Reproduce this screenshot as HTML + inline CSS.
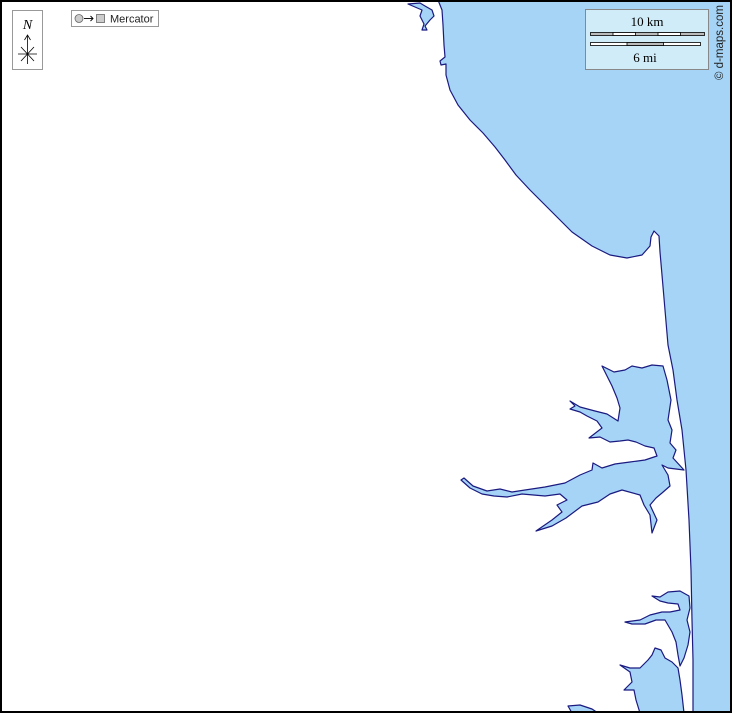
<!DOCTYPE html>
<html><head><meta charset="utf-8"><style>
html,body{margin:0;padding:0;background:#fff}
svg{display:block}
</style></head><body>
<svg width="732" height="713" viewBox="0 0 732 713" xmlns="http://www.w3.org/2000/svg">
<rect x="0" y="0" width="732" height="713" fill="#fff"/>
<g fill="#a6d4f6" stroke="#1a1a80" stroke-width="1.2" stroke-linejoin="round">
<path d="M438,0 L442,10 L443,25 L444,45 L445,57 L440,61 L441,65 L446,64 L446,75 L450,90 L458,105 L470,120 L483,133 L495,147 L505,160 L516,175 L530,190 L545,205 L556,216 L572,232 L592,246 L610,255 L627,258 L642,255 L650,246 L651,237 L654,231 L659,236 L660,252 L662,275 L665,310 L668,345 L673,370 L677,400 L682,430 L686,470 L689,520 L691,570 L692,620 L693,660 L693,713 L732,713 L732,0 Z"/>
<path d="M408,4 L420,3 L425,6 L432,10 L434,16 L430,20 L425,26 L427,30 L422,30 L424,24 L420,16 L422,10 L415,7 Z"/>
<path d="M602,366 L614,372 L625,370 L632,366 L642,368 L652,365 L663,366 L667,380 L671,400 L668,420 L672,430 L670,443 L676,450 L673,458 L684,470 L668,468 L662,465 L668,475 L670,486 L662,493 L656,498 L650,505 L657,520 L652,533 L650,515 L644,505 L640,495 L622,490 L610,494 L598,502 L582,506 L566,518 L552,526 L536,531 L552,520 L562,512 L557,505 L567,500 L560,494 L545,496 L522,494 L507,497 L494,496 L482,494 L470,488 L461,480 L464,478 L473,486 L487,491 L500,489 L512,492 L525,490 L545,487 L565,483 L580,475 L592,470 L593,463 L602,468 L615,464 L630,462 L645,460 L657,456 L654,448 L645,446 L636,442 L628,440 L620,441 L610,442 L600,437 L589,438 L602,428 L597,421 L587,416 L580,412 L570,409 L575,406 L570,401 L580,407 L595,411 L607,414 L618,421 L620,408 L617,398 L612,386 Z"/>
<path d="M652,596 L660,597 L668,592 L680,591 L689,596 L690,608 L687,620 L690,632 L688,645 L684,658 L680,666 L678,655 L676,642 L672,632 L665,620 L656,620 L645,624 L632,624 L625,622 L640,620 L650,615 L662,612 L670,612 L680,610 L678,604 L668,603 L660,601 Z"/>
<path d="M655,648 L661,650 L665,658 L672,662 L678,668 L680,680 L682,695 L684,713 L640,713 L636,700 L634,690 L624,690 L632,682 L630,672 L620,665 L630,668 L640,668 L648,660 L652,655 Z"/>
<path d="M568,706 L580,705 L592,709 L598,713 L572,713 Z"/>
</g>
<rect x="1" y="1" width="730" height="711" fill="none" stroke="#000" stroke-width="2"/>
<rect x="12.5" y="10.5" width="30" height="59" fill="#fff" stroke="#999"/>
<text x="27.5" y="29" font-family="Liberation Serif, serif" font-style="italic" font-size="14" text-anchor="middle">N</text>
<g stroke="#000" stroke-width="0.8" fill="none">
<line x1="27.5" y1="36" x2="27.5" y2="64"/>
<path d="M24.5,40 L27.5,35 L30.5,40"/>
<line x1="18" y1="54" x2="37" y2="54"/>
<line x1="21" y1="47" x2="34" y2="61"/>
<line x1="34" y1="47" x2="21" y2="61"/>
</g>
<rect x="71.5" y="10.5" width="87" height="16" fill="#fff" stroke="#999"/>
<circle cx="79" cy="18.5" r="4" fill="#ccc" stroke="#666" stroke-width="0.8"/>
<g stroke="#000" stroke-width="0.9" fill="none">
<line x1="84" y1="18.5" x2="93" y2="18.5"/>
<path d="M90.5,16 L93,18.5 L90.5,21"/>
</g>
<rect x="96.5" y="14.5" width="8" height="8" fill="#ccc" stroke="#666" stroke-width="0.8"/>
<text x="110" y="22.5" font-family="Liberation Sans, sans-serif" font-size="11" fill="#222">Mercator</text>
<rect x="585.5" y="9.5" width="123" height="60" fill="#d0ecf8" stroke="#888"/>
<text x="647" y="26" font-family="Liberation Serif, serif" font-size="13" text-anchor="middle">10 km</text>
<g stroke="#000" stroke-width="0.8">
<rect x="590.5" y="32.5" width="114" height="3" fill="#bbb"/>
<rect x="613" y="32.5" width="22.5" height="3" fill="#fff"/>
<rect x="658" y="32.5" width="22.5" height="3" fill="#fff"/>
<rect x="590.5" y="42.5" width="110" height="3" fill="#fff"/>
<rect x="627" y="42.5" width="36.5" height="3" fill="#bbb"/>
</g>
<text x="645" y="62" font-family="Liberation Serif, serif" font-size="13" text-anchor="middle">6 mi</text>
<text transform="translate(723,80) rotate(-90)" font-family="Liberation Sans, sans-serif" font-size="11.5" fill="#222">© d-maps.com</text>
</svg>
</body></html>
